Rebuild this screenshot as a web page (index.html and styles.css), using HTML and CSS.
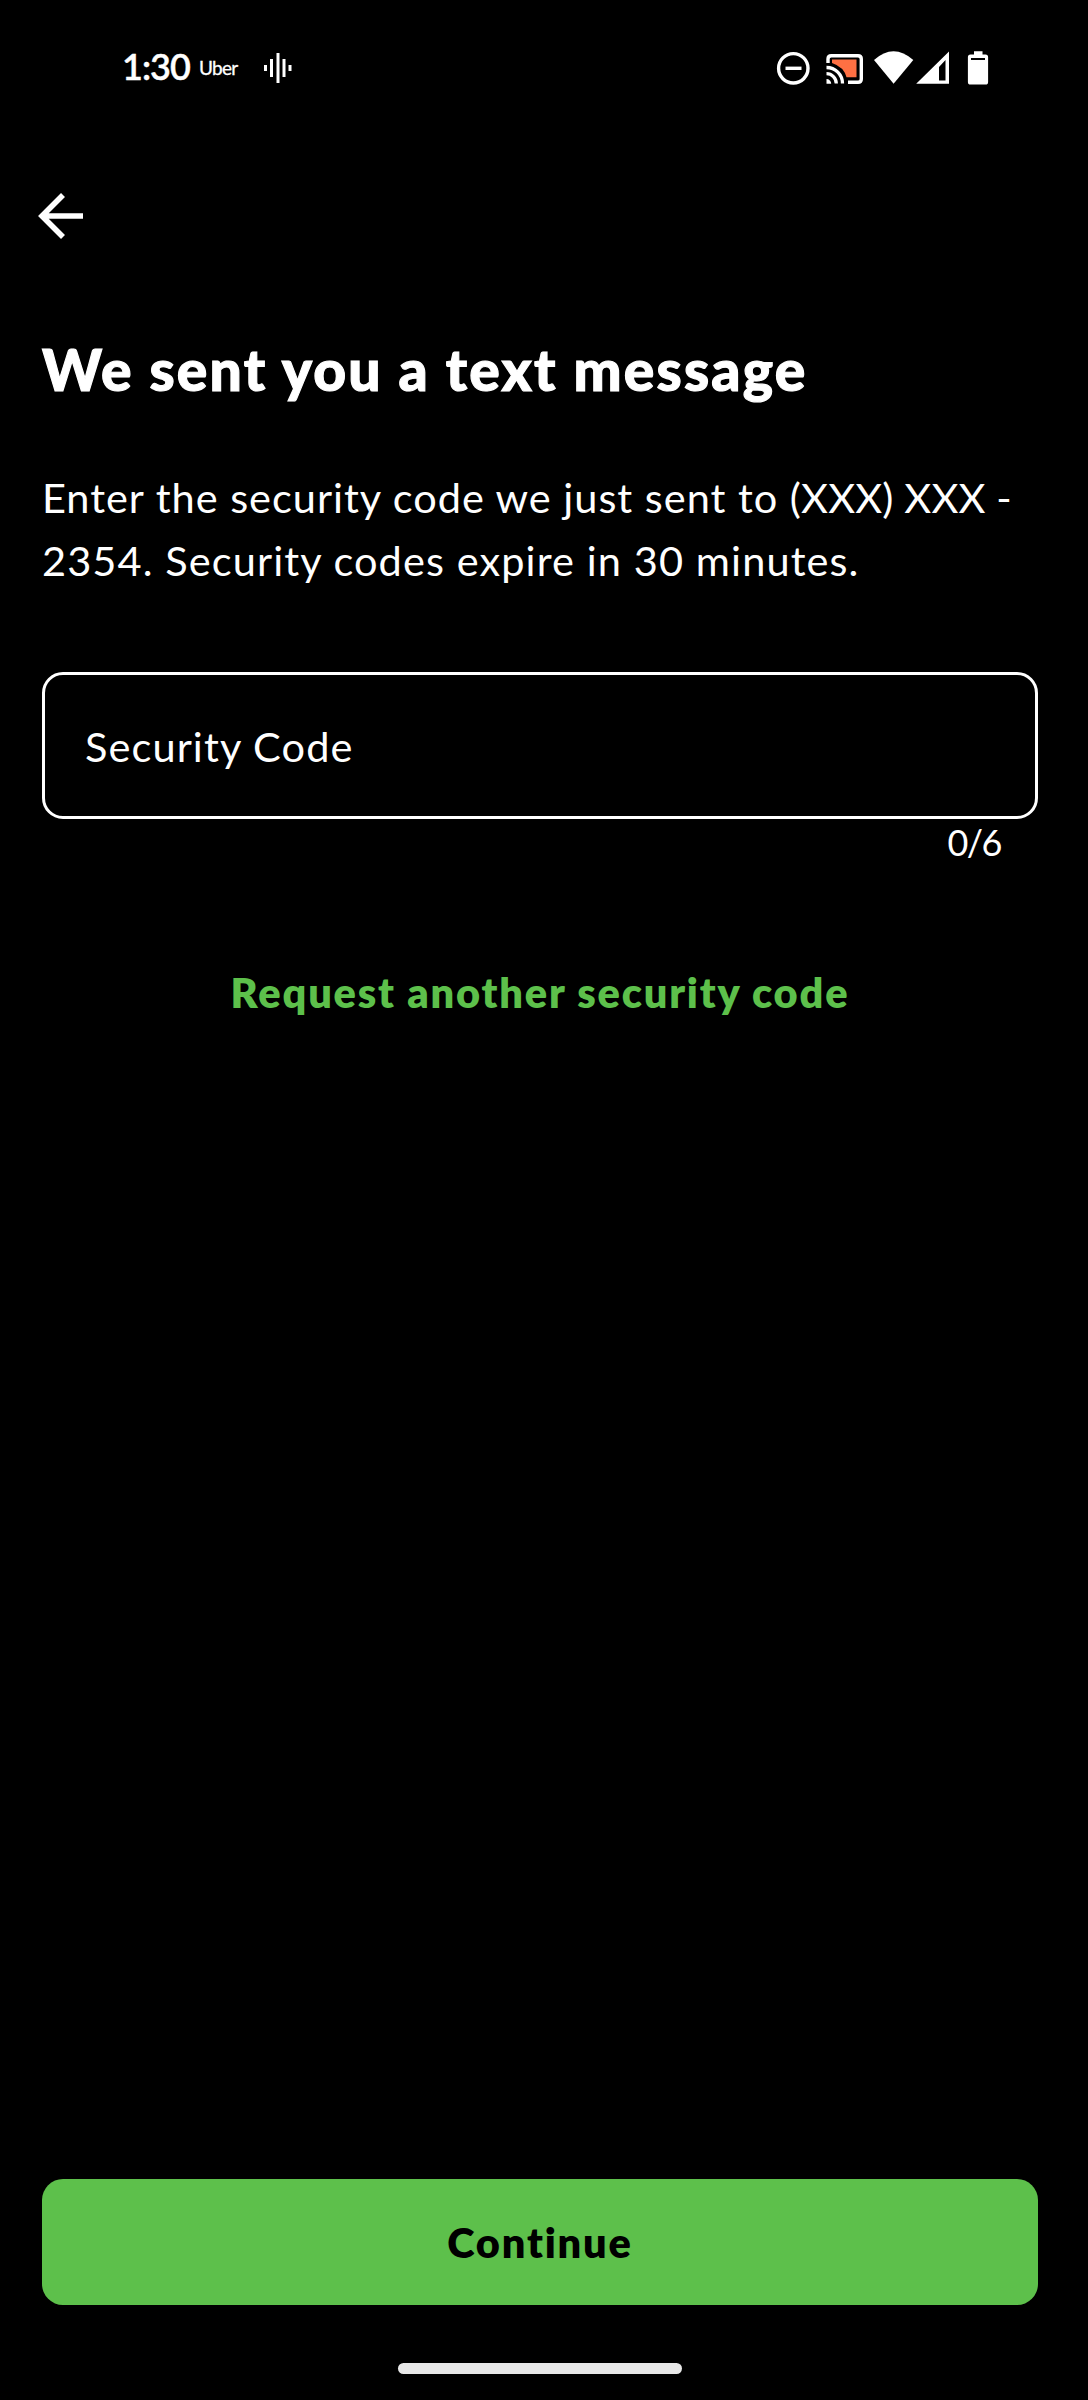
FILE: index.html
```html
<!DOCTYPE html>
<html lang="en">
<head>
<meta charset="utf-8">
<title>Security code</title>
<link rel="stylesheet" href="styles.css">
</head>
<body>
<div class="screen">
  <header class="status">
    <span class="time">1:30</span>
    <span class="carrier">Uber</span>
    <svg class="wave" width="28" height="30" viewBox="0 0 28 30" fill="#fff"><path d="M0 12h3v6H0zM6 6h3v18H6zM12.500 0h3v30h-3zM18.500 6h3v18h-3zM24.500 12h3v6h-3z"/></svg>
    <svg class="icons" width="214" height="36" viewBox="776 49 214 36">
      <circle cx="793.300" cy="67.300" r="14.700" fill="none" stroke="#fff" stroke-width="3.400"/>
      <path d="M785.500 65.600h16v3.400h-16z" fill="#fff"/>
      <path d="M832 58.500h24.500v17.800H846.500Q844 66 832 62z" fill="#ff7043"/>
      <path d="M828 62v-4q0-3.300 3.300-3.300h26.700q3.300 0 3.300 3.300v20q0 3.300-3.300 3.300H848" fill="none" stroke="#fff" stroke-width="3.400"/>
      <path d="M826.500 66.500A16 16 0 0 1 842.500 82.500M826.500 72.700A9.800 9.800 0 0 1 836.300 82.500" fill="none" stroke="#fff" stroke-width="3.300"/>
      <path d="M826.500 78a4.700 4.700 0 0 1 4.700 4.700h-4.700z" fill="#fff"/>
      <path d="M874 59Q893.500 41.500 913.300 59L893.600 82.800z" fill="#fff"/>
      <path d="M949 50.500v32.300h-32.800zM945.500 59l-6.500 7v13.600h6.500z" fill="#fff" fill-rule="evenodd"/>
      <path d="M974 50.300h8.500v3.200h3q2.600 0 2.600 2.600v24.900q0 2.600-2.600 2.600h-15q-2.600 0-2.600-2.600V56.100q0-2.600 2.600-2.600h3.500zM971 57v2h14v-2z" fill="#fff" fill-rule="evenodd"/>
    </svg>
  </header>
  <nav class="toolbar">
    <svg width="46" height="46" viewBox="0 0 46 46" fill="none" stroke="#fff" stroke-width="5.600"><path d="M25 2L4 23L25 44M5 23H45"/></svg>
  </nav>
  <main class="content">
    <h1 class="title">We sent you a text message</h1>
    <p class="message"><span class="sent">Enter the security code we just sent to <span class="phone">(XXX) XXX -</span></span><br>2354. Security codes expire in 30 minutes.</p>
    <div class="field">Security Code</div>
    <div class="counter">0/6</div>
    <div class="resend">Request another security code</div>
  </main>
  <footer class="footer">
    <div class="button">Continue</div>
    <div class="handle"></div>
  </footer>
</div>
</body>
</html>
```
FILE: styles.css
```css
* { box-sizing: border-box; }
body { margin: 0; background: #000; }
.screen {
  width: 1088px;
  height: 2400px;
  display: flex;
  flex-direction: column;
  background: #000;
  color: #fff;
  font-family: Lato, "Liberation Sans", sans-serif;
}
.status {
  height: 136px;
  padding: 0 98px 0 122px;
  display: flex;
  align-items: center;
}
.time { width: 69px; padding-bottom: 4px; font-size: 36px; font-weight: 600; letter-spacing: -1px; -webkit-text-stroke: 0.4px; }
.carrier { width: 40px; margin-left: 8px; padding-bottom: 2px; font-size: 19px; letter-spacing: -0.7px; -webkit-text-stroke: 0.3px; }
.wave { margin-left: 25px; }
.icons { margin-left: auto; }
.toolbar { height: 199px; padding: 57px 38px 0; }
.content { flex: 1; padding: 0 50px 0 42px; }
.title { margin: 0; font-size: 57px; line-height: 68px; font-weight: 900; letter-spacing: 2.2px; -webkit-text-stroke: 1.1px; }
.message { margin: 63px 0 0; font-size: 41.5px; line-height: 63px; letter-spacing: 1.1px; white-space: nowrap; }
.sent { letter-spacing: 0.98px; }
.phone { letter-spacing: 0.15px; }
.field {
  height: 147px;
  margin-top: 80px;
  padding-left: 40px;
  display: flex;
  align-items: center;
  border: 3px solid #fff;
  border-radius: 21px;
  font-size: 41.5px;
  letter-spacing: 1.1px;
}
.counter { padding-right: 37px; font-size: 36px; line-height: 46px; letter-spacing: -1.5px; text-align: right; }
.resend { margin-top: 97px; font-size: 41.5px; line-height: 60px; font-weight: 800; letter-spacing: 1.82px; text-align: center; color: #5dc04b; }
.footer { height: 221px; padding: 0 50px 0 42px; }
.button {
  height: 126px;
  display: flex;
  align-items: center;
  justify-content: center;
  border-radius: 21px;
  background: #5dc04b;
  color: #000;
  font-size: 41.5px;
  font-weight: 800;
  letter-spacing: 1.8px;
}
.handle { width: 284px; height: 11px; margin: 58px auto 0; border-radius: 6px; background: #e8e8e8; }
```
